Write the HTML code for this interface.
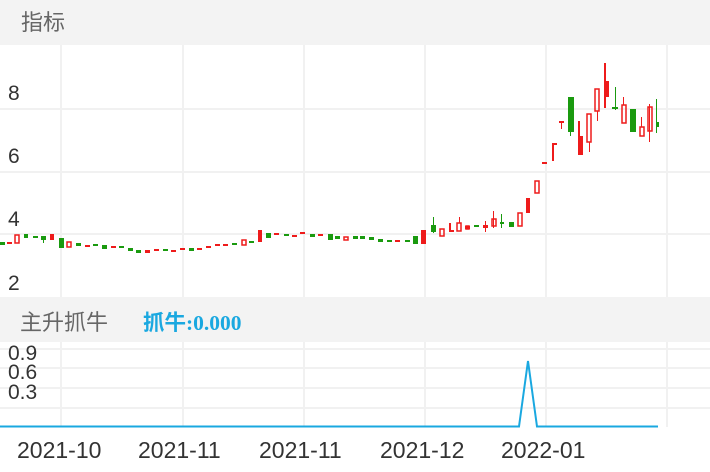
<!DOCTYPE html>
<html><head><meta charset="utf-8"><style>
html,body{margin:0;padding:0;width:710px;height:472px;overflow:hidden;background:#fff;font-family:"Liberation Sans","Noto Sans CJK SC",sans-serif}
</style></head><body>
<svg width="710" height="472" xmlns="http://www.w3.org/2000/svg" style="position:absolute;left:0;top:0">
<rect x="0" y="0" width="710" height="45" fill="#f3f3f3"/>
<text x="21" y="30" font-size="22" fill="#666" font-family="Liberation Sans, Noto Sans CJK SC, sans-serif">指标</text>
<g stroke="#f1f1f1" stroke-width="2">
<line x1="0" y1="109" x2="710" y2="109"/><line x1="0" y1="172" x2="710" y2="172"/><line x1="0" y1="234" x2="710" y2="234"/>
<line x1="61" y1="45" x2="61" y2="297"/><line x1="183" y1="45" x2="183" y2="297"/><line x1="304" y1="45" x2="304" y2="297"/><line x1="425" y1="45" x2="425" y2="297"/><line x1="546" y1="45" x2="546" y2="297"/><line x1="667" y1="45" x2="667" y2="297"/>
</g>
<g font-size="21" fill="#333">
<text x="8" y="100">8</text><text x="8" y="163">6</text><text x="8" y="226">4</text><text x="8" y="290">2</text>
</g>
<g fill="#1a9a0f">
<rect x="0" y="242" width="5" height="3"/><rect x="24" y="234" width="4" height="4"/><rect x="33" y="236" width="5" height="2"/><rect x="41" y="236" width="5" height="4"/><rect x="43" y="236" width="1" height="7"/>
<rect x="59" y="238" width="5" height="10"/><rect x="76" y="243" width="5" height="3"/><rect x="93" y="244" width="5" height="2"/><rect x="102" y="245" width="5" height="4"/><rect x="119" y="246" width="5" height="2"/><rect x="128" y="248" width="5" height="3"/><rect x="136" y="250" width="5" height="3"/><rect x="163" y="249" width="5" height="2"/><rect x="189" y="248" width="5" height="3"/><rect x="232" y="243" width="5" height="2"/><rect x="249" y="241" width="5" height="2"/><rect x="266" y="233" width="5" height="5"/>
<rect x="284" y="234" width="5" height="2"/><rect x="310" y="234" width="5" height="3"/><rect x="328" y="234" width="5" height="6"/><rect x="335" y="236" width="5" height="3"/><rect x="353" y="236" width="5" height="3"/><rect x="360" y="236" width="5" height="3"/><rect x="369" y="237" width="5" height="3"/><rect x="378" y="239" width="5" height="3"/><rect x="387" y="240" width="5" height="2"/><rect x="405" y="240" width="5" height="2"/><rect x="413" y="236" width="5" height="8"/>
<rect x="431" y="225" width="5" height="7"/><rect x="433" y="217" width="1" height="16"/><rect x="474" y="225" width="5" height="2"/><rect x="501" y="214" width="1" height="14"/><rect x="500" y="222" width="4" height="2"/><rect x="509" y="222" width="5" height="5"/>
<rect x="568" y="97" width="6" height="35"/><rect x="570" y="97" width="1" height="39"/><rect x="615" y="87" width="1" height="23"/><rect x="612" y="107" width="6" height="2"/><rect x="630" y="109" width="6" height="23"/><rect x="656" y="99" width="1" height="34"/><rect x="656" y="122" width="3" height="5"/>
</g>
<g fill="#ee1b1b">
<rect x="7" y="242" width="5" height="2"/><rect x="50" y="234" width="4" height="6"/><rect x="85" y="245" width="5" height="2"/><rect x="111" y="246" width="5" height="2"/><rect x="145" y="250" width="5" height="3"/><rect x="154" y="249" width="5" height="2"/><rect x="171" y="250" width="5" height="2"/><rect x="180" y="248" width="5" height="2"/><rect x="197" y="248" width="5" height="2"/><rect x="206" y="246" width="5" height="2"/><rect x="215" y="244" width="5" height="2"/><rect x="223" y="244" width="5" height="2"/>
<rect x="258" y="230" width="4" height="12"/><rect x="274" y="233" width="5" height="2"/><rect x="292" y="235" width="5" height="2"/><rect x="300" y="232" width="5" height="2"/><rect x="318" y="234" width="5" height="2"/><rect x="395" y="240" width="5" height="2"/>
<rect x="421" y="230" width="5" height="14"/><rect x="449" y="223" width="2" height="9"/><rect x="449" y="230" width="5" height="2"/><rect x="465" y="226" width="5" height="3"/><rect x="483" y="225" width="5" height="3"/><rect x="485" y="221" width="1" height="11"/><rect x="526" y="198" width="4" height="15"/>
<rect x="542" y="162" width="5" height="2"/><rect x="552" y="144" width="2" height="17"/><rect x="552" y="143" width="5" height="2"/><rect x="559" y="121" width="5" height="2"/><rect x="561" y="121" width="1" height="8"/>
<rect x="578" y="121" width="2" height="34"/><rect x="578" y="136" width="5" height="19"/><rect x="604" y="63" width="2" height="45"/><rect x="604" y="81" width="5" height="16"/>
</g>
<g fill="none" stroke="#ee1b1b" stroke-width="1.5">
<rect x="15" y="235" width="4" height="8"/><rect x="67" y="242" width="4" height="5"/><rect x="242" y="240" width="4" height="5"/><rect x="344" y="237" width="4" height="3"/>
<rect x="440" y="229" width="4" height="7"/><rect x="457" y="223" width="4" height="8"/><rect x="466" y="226" width="3" height="3"/><rect x="492" y="219" width="4" height="7"/><rect x="518" y="213" width="4" height="13"/><rect x="535" y="181" width="4" height="12"/>
<rect x="587" y="114" width="4" height="28"/><rect x="595" y="89" width="4" height="22"/><rect x="622" y="105" width="4" height="18"/><rect x="640" y="127" width="4" height="9"/><rect x="648" y="107" width="4" height="24"/>
</g>
<g stroke="#ee1b1b" stroke-width="1"><line x1="493.5" y1="211" x2="493.5" y2="228"/><line x1="589.5" y1="142" x2="589.5" y2="152"/><line x1="597.5" y1="111" x2="597.5" y2="121"/><line x1="649.5" y1="104" x2="649.5" y2="142"/><line x1="641.5" y1="117" x2="641.5" y2="127"/><line x1="623.5" y1="97" x2="623.5" y2="105"/><line x1="459.5" y1="217" x2="459.5" y2="223"/></g>
<rect x="0" y="297" width="710" height="45" fill="#f3f3f3"/>
<text x="20" y="330" font-size="22" fill="#666" font-family="Liberation Sans, Noto Sans CJK SC, sans-serif">主升抓牛</text>
<text x="143" y="330" font-size="21.5" font-weight="bold" fill="#1aa8e0" font-family="Liberation Serif, Noto Sans CJK SC, serif">抓牛:0.000</text>
<g stroke="#f1f1f1" stroke-width="2">
<line x1="0" y1="349" x2="710" y2="349"/><line x1="0" y1="368" x2="710" y2="368"/><line x1="0" y1="388" x2="710" y2="388"/><line x1="0" y1="408" x2="710" y2="408"/>
<line x1="61" y1="342" x2="61" y2="427"/><line x1="183" y1="342" x2="183" y2="427"/><line x1="304" y1="342" x2="304" y2="427"/><line x1="425" y1="342" x2="425" y2="427"/><line x1="546" y1="342" x2="546" y2="427"/><line x1="667" y1="342" x2="667" y2="427"/>
</g>
<g font-size="21" fill="#333"><text x="8" y="360">0.9</text><text x="8" y="379">0.6</text><text x="8" y="399">0.3</text></g>
<polyline points="0,426.5 519,426.5 528,361 537,426.5 658,426.5" fill="none" stroke="#1aa8e0" stroke-width="2"/>
<g font-size="23" fill="#333"><text x="17" y="458">2021-10</text><text x="138" y="458">2021-11</text><text x="259" y="458">2021-11</text><text x="380" y="458">2021-12</text><text x="501" y="458">2022-01</text></g>
</svg>
</body></html>
